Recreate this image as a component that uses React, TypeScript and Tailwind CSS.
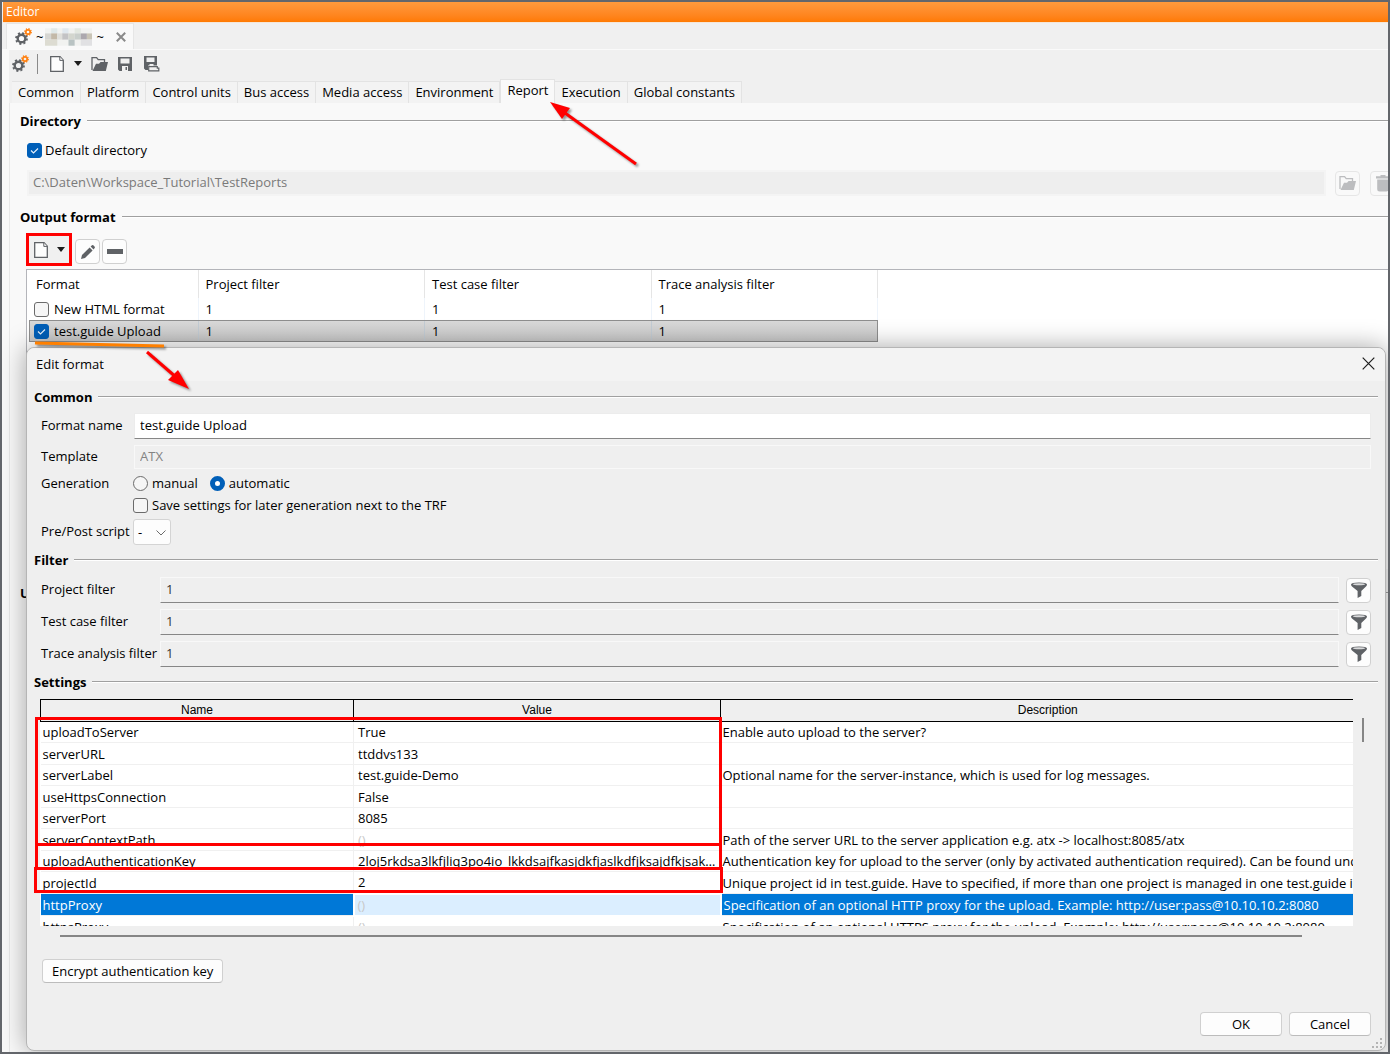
import React, { useState } from 'react';

interface FormatRow {
  name: string;
  enabled: boolean;
}

interface Setting {
  name: string;
  value: string;
  description: string;
}

const TABS = [
  'Common',
  'Platform',
  'Control units',
  'Bus access',
  'Media access',
  'Environment',
  'Report',
  'Execution',
  'Global constants',
];

const FORMATS: FormatRow[] = [
  { name: 'New HTML format', enabled: false },
  { name: 'test.guide Upload', enabled: true },
];

const FILTERS = ['Project filter', 'Test case filter', 'Trace analysis filter'];

const SETTINGS: Setting[] = [
  { name: 'uploadToServer', value: 'True', description: 'Enable auto upload to the server?' },
  { name: 'serverURL', value: 'ttddvs133', description: '' },
  { name: 'serverLabel', value: 'test.guide-Demo', description: 'Optional name for the server-instance, which is used for log messages.' },
  { name: 'useHttpsConnection', value: 'False', description: '' },
  { name: 'serverPort', value: '8085', description: '' },
  { name: 'serverContextPath', value: '', description: 'Path of the server URL to the server application e.g. atx -> localhost:8085/atx' },
  {
    name: 'uploadAuthenticationKey',
    value: '2loj5rkdsa3lkfjliq3po4io_lkkdsajfkasjdkfjaslkdfjksajdfkjsakdfjlk',
    description: 'Authentication key for upload to the server (only by activated authentication required). Can be found und',
  },
  {
    name: 'projectId',
    value: '2',
    description: 'Unique project id in test.guide. Have to specified, if more than one project is managed in one test.guide in',
  },
  { name: 'httpProxy', value: '', description: 'Specification of an optional HTTP proxy for the upload. Example: http://user:pass@10.10.10.2:8080' },
  { name: 'httpsProxy', value: '', description: 'Specification of an optional HTTPS proxy for the upload. Example: http://user:pass@10.10.10.2:8080' },
];

const GearsIcon = () => (
  <svg width="17" height="17" viewBox="0 0 17 17" fill="none" className="shrink-0">
    <circle cx="6.5" cy="10.5" r="3.8" stroke="#5f6266" strokeWidth="2.4" />
    <circle cx="6.5" cy="10.5" r="5.5" stroke="#5f6266" strokeWidth="1.8" strokeDasharray="2.1 2.22" />
    <circle cx="13" cy="4" r="2.2" stroke="#ff7f0e" strokeWidth="1.7" />
    <circle cx="13" cy="4" r="3.3" stroke="#ff7f0e" strokeWidth="1.2" strokeDasharray="1.3 1.29" />
  </svg>
);

const FileIcon = () => (
  <svg width="14" height="16" viewBox="0 0 14 16" fill="#fdfdfd" stroke="#5f6266" className="shrink-0">
    <path d="M.7.7h9.3l3.3 3.6v11H.7z" strokeWidth="1.3" />
    <path d="M9.8.8v3.6h3.5" strokeWidth="1" />
  </svg>
);

const CaretIcon = () => (
  <svg width="8" height="5" viewBox="0 0 8 5" className="shrink-0">
    <path d="M0 0h8L4 5z" fill="#1c1c1c" />
  </svg>
);

const FolderIcon = ({ className }: { className: string }) => (
  <svg width="17" height="14" viewBox="0 0 17 14" className={className}>
    <path d="M1 13V.7h4.600l1.600 2h6.300v2.300" fill="none" stroke="currentColor" strokeWidth="1.300" />
    <path d="M1.500 14 5 6.800h3L9.600 5H17l-2.200 9z" fill="currentColor" />
  </svg>
);

const SaveIcon = () => (
  <svg width="14" height="14" viewBox="0 0 14 14">
    <path fillRule="evenodd" d="M0 0h14v14H1.5L0 12.500zM2.500 1.500v5h9v-5zM4 9v5h6V9z" fill="#5f6266" />
    <path d="M7.500 10h1.500v3H7.500z" fill="#5f6266" />
  </svg>
);

const SaveAsIcon = () => (
  <svg width="16" height="16" viewBox="0 0 16 16">
    <path fillRule="evenodd" d="M0 0h13v9.500H4V14H1.500L0 12.500zM2.500 1.500v4.500h8V1.500z" fill="#5f6266" />
    <path d="M5.500 8h4v2h-4z" fill="#efefef" />
    <path d="M4.700 10.700h8.600v1.500h1.500v2.600H4.700z" fill="#efefef" stroke="#5f6266" strokeWidth="1.200" />
  </svg>
);

const TrashIcon = () => (
  <svg width="14" height="17" viewBox="0 0 14 17" fill="#bcbdbf" className="shrink-0">
    <path d="M4.500 0h5v1.300H14V3.600H0V1.300h4.500zM1.200 4.600h11.600V14q0 2.500-2.500 2.500H3.700Q1.200 16.500 1.200 14z" />
  </svg>
);

const PencilIcon = () => (
  <svg width="14" height="14" viewBox="0 0 14 14" fill="#5f6266">
    <path d="M0 14l1-4 7.600-7.600 3 3L4 13zM9.600 1.500 11 .3q.8-.6 1.600.2l.9.900q.8.800.2 1.600l-1.200 1.400z" />
  </svg>
);

const FunnelIcon = () => (
  <svg width="16" height="16" viewBox="0 0 16 16">
    <path d="M0 2.500Q0 .4 8 .4t8 2.100q0 1-1 1.900L10.300 9v5L6.600 16V9L1 4.400Q0 3.500 0 2.500z" fill="#5f6266" />
    <ellipse cx="8" cy="2.300" rx="6" ry="1" fill="#d9dadb" />
  </svg>
);

const GripIcon = () => (
  <svg width="10" height="10" viewBox="0 0 10 10" fill="#b4b4b4" className="absolute right-[3px] bottom-[2px]">
    <path d="M8 0h2v2H8zM8 4h2v2H8zM4 4h2v2H4zM8 8h2v2H8zM4 8h2v2H4zM0 8h2v2H0z" />
  </svg>
);

const SectionTitle = ({ children }: { children: React.ReactNode }) => (
  <div className="flex h-5 items-center gap-[6px]">
    <h2 className="font-bold">{children}</h2>
    <span className="h-[2px] grow border-t border-[#a0a0a0] bg-white" />
  </div>
);

const Checkbox = ({ id, defaultChecked }: { id: string; defaultChecked?: boolean }) => (
  <span className="inline-grid h-[15px] w-[15px] shrink-0">
    <input
      id={id}
      type="checkbox"
      defaultChecked={defaultChecked}
      className="peer col-start-1 row-start-1 h-[15px] w-[15px] appearance-none rounded-[3px] border border-[#6b6b6b] bg-[#f6f6f6] checked:border-[#005fb8] checked:bg-[#005fb8]"
    />
    <svg viewBox="0 0 15 15" className="pointer-events-none invisible col-start-1 row-start-1 peer-checked:visible">
      <path d="M4 7.500l2.500 2.500L11 5.500" fill="none" stroke="#e8f1fa" strokeWidth="1.100" />
    </svg>
  </span>
);

const Radio = ({ id, defaultChecked }: { id: string; defaultChecked?: boolean }) => (
  <input
    id={id}
    type="radio"
    name="generation"
    defaultChecked={defaultChecked}
    className="h-[15px] w-[15px] shrink-0 appearance-none rounded-full border border-[#6b6b6b] bg-[#f6f6f6] checked:border-[5px] checked:border-[#005fb8] checked:bg-white"
  />
);

const iconButton = 'flex h-[25px] w-[25px] shrink-0 items-center justify-center rounded-[4px] border border-[#d0d0d0] bg-[#fdfdfd]';
const textButton = 'h-6 rounded-[4px] border border-[#d0d0d0] border-b-[#bcbcbc] bg-[#fdfdfd]';
const fieldLabel = 'shrink-0 whitespace-nowrap pb-[2px]';

const EditFormatDialog = () => (
  <section
    role="dialog"
    aria-label="Edit format"
    className="absolute top-[345px] right-[2px] left-6 rounded-[8px] border border-[#b5b5b5] bg-[#efefef] pb-[14px] shadow-[0_0_26px_rgba(0,0,0,0.35)]"
  >
    <header className="flex h-[33px] items-center justify-between rounded-t-[8px] bg-[#f3f3f3] pr-[10px] pb-[2px] pl-[9px]">
      <h1>Edit format</h1>
      <button aria-label="Close">
        <svg width="13" height="13" viewBox="0 0 13 13" stroke="#1c1c1c" strokeWidth="1.200">
          <path d="M.7.7l11.600 11.600M12.300.7.7 12.300" />
        </svg>
      </button>
    </header>

    <div className="mt-[6px] px-[7px]">
      <SectionTitle>Common</SectionTitle>
      <div className="px-[7px]">
        <div className="mt-[6px] flex h-[26px] items-center">
          <label htmlFor="format-name" className={`${fieldLabel} w-[93px]`}>Format name</label>
          <input id="format-name" defaultValue="test.guide Upload" className="h-full min-w-0 grow border border-[#ececec] border-b-[#868686] bg-white px-[5px] pb-[2px]" />
        </div>
        <div className="mt-[6px] flex h-6 items-center">
          <label htmlFor="template" className={`${fieldLabel} w-[93px]`}>Template</label>
          <input id="template" disabled defaultValue="ATX" className="h-full min-w-0 grow border border-[#f8f8f8] px-[5px] pb-[2px] text-[#838383]" />
        </div>
        <div className="mt-1 flex h-5 items-center">
          <span className="w-[92px] shrink-0">Generation</span>
          <Radio id="gen-manual" />
          <label htmlFor="gen-manual" className="mr-[12px] ml-1">manual</label>
          <Radio id="gen-auto" defaultChecked />
          <label htmlFor="gen-auto" className="ml-1">automatic</label>
        </div>
        <div className="mt-[2px] flex h-5 items-center pl-[92px]">
          <Checkbox id="save-settings" />
          <label htmlFor="save-settings" className="ml-1">Save settings for later generation next to the TRF</label>
        </div>
        <div className="mt-1 flex h-[26px] items-center">
          <label htmlFor="script" className={`${fieldLabel} w-[92px]`}>Pre/Post script</label>
          <span className="relative h-full w-[38px]">
            <select id="script" className="h-full w-full appearance-none rounded-[3px] border border-[#d4d4d4] bg-[#fdfdfd] pl-1">
              <option>-</option>
            </select>
            <svg width="10" height="6" viewBox="0 0 10 6" fill="none" stroke="#6b6b6b" className="pointer-events-none absolute top-[11px] right-[5px]">
              <path d="M.5.5 5 5 9.500.5" />
            </svg>
          </span>
        </div>
      </div>

      <div className="mt-[5px]">
        <SectionTitle>Filter</SectionTitle>
      </div>
      <div className="mt-[7px] flex flex-col gap-[6px] px-[7px]">
        {FILTERS.map(filter => (
          <div key={filter} className="flex h-[26px] items-center">
            <label htmlFor={filter} className={`${fieldLabel} w-[119px]`}>{filter}</label>
            <input id={filter} readOnly defaultValue="1" className="mr-[7px] h-full min-w-0 grow border border-[#f8f8f8] border-b-[#868686] px-[5px] pb-[2px] text-[#333]" />
            <button aria-label={`Edit ${filter}`} className={iconButton}><FunnelIcon /></button>
          </div>
        ))}
      </div>

      <div className="mt-[5px]">
        <SectionTitle>Settings</SectionTitle>
      </div>
      <div className="relative mt-[7px] mr-[25px] ml-[6px]">
        <div className="h-[227px] overflow-hidden bg-white">
          <table className="w-[1334px] table-fixed border-collapse">
            <thead>
              <tr className="h-[22px] border-y border-black bg-[#efefef] font-['Liberation_Sans',sans-serif] text-[12px] leading-4">
                <th className="w-[313px] border-x border-black p-0 pb-[2px] font-normal">Name</th>
                <th className="w-[367px] border-x border-black p-0 pb-[2px] font-normal">Value</th>
                <th className="w-[654px] p-0 pb-[2px] font-normal">Description</th>
              </tr>
            </thead>
            <tbody>
              {SETTINGS.map(s => {
                const selected = s.name === 'httpProxy';
                return (
                  <tr key={s.name} className="h-[21px] border-b border-[#f0f0f0] even:h-[22px]">
                    <td className={selected ? 'bg-[#0078d7] p-0 pl-[2px] text-white' : 'p-0 pl-[2px]'}>{s.name}</td>
                    <td className={selected ? 'border-2 border-white bg-[#dbeeff] p-0 pl-[3px]' : 'truncate border-l border-[#f0f0f0] p-0 pl-1'}>
                      {s.value || <span className="text-[#c8c8c8]">()</span>}
                    </td>
                    <td className={selected ? 'overflow-hidden bg-[#0078d7] p-0 pl-[2px] whitespace-nowrap text-white' : 'overflow-hidden p-0 pl-[2px] whitespace-nowrap'}>
                      {s.description}
                    </td>
                  </tr>
                );
              })}
            </tbody>
          </table>
        </div>
        <span className="absolute top-[19px] right-[-11px] h-6 w-[2px] bg-[#868686]" />
        {/* markers around the upload settings */}
        <span className="absolute top-[18px] left-[-5px] h-[129px] w-[687px] border-[3px] border-[#f00]" />
        <span className="absolute top-[144px] left-[-5px] h-[27px] w-[687px] border-[3px] border-[#f00]" />
        <span className="absolute top-[168px] left-[-6px] h-[26px] w-[689px] border-[3px] border-[#f00]" />
      </div>
      <div className="mt-[9px] mr-[76px] ml-[26px] h-[2px] bg-[#868686]" />

      <button className={`${textButton} mt-[22px] ml-2 px-[9px]`}>Encrypt authentication key</button>
      <div className="mt-[29px] flex justify-end gap-[7px] pr-[7px]">
        <button className={`${textButton} w-[82px]`}>OK</button>
        <button className={`${textButton} w-[82px]`}>Cancel</button>
      </div>
    </div>
    <GripIcon />

    {/* underline and arrow leading from the selected format into the dialog */}
    <svg width="170" height="54" viewBox="0 0 170 54" className="pointer-events-none absolute top-[-8px] left-[5px] drop-shadow-[2px_2px_1px_rgba(0,0,0,0.4)]">
      <path d="M3 3 132 6" stroke="#ff8000" strokeWidth="3" />
      <path d="M115 12 145 38" stroke="#f00" strokeWidth="3" />
      <path d="M157 49 136 40 146 30z" fill="#f00" />
    </svg>
  </section>
);

const App: React.FC = () => {
  const [activeTab, setActiveTab] = useState('Report');

  return (
    <div className="relative flex min-h-screen flex-col overflow-hidden border-2 border-[#63666b] bg-[#f0f0f0] font-['Open_Sans','Noto_Sans',sans-serif] text-[13px] leading-5 text-black">
      <div className="ml-px flex h-[21px] items-center border-b border-[#f5e6d8] bg-linear-to-b from-[#ff9a3c] to-[#ff7a00] pl-[3px] text-[12px] text-white">
        Editor
      </div>

      <div className="flex h-[27px] items-end border-b border-[#fafafa] pl-1">
        <div className="flex h-[26px] items-center border border-b-0 border-[#e6e6e6] bg-[#f9f9f9] pr-[7px] pl-2">
          <GearsIcon />
          <span className="ml-1">~</span>
          <svg width="47" height="18" viewBox="0 0 46 17" className="mx-[2px]">
            <rect width="46" height="17" fill="#f1f2f0" />
            <rect x="6" width="6" height="5" fill="#dfe8e8" />
            <rect x="17" width="6" height="5" fill="#e0e8ee" />
            <rect x="29" width="6" height="5" fill="#e3e8e0" />
            <rect y="5" width="6" height="6" fill="#d6d6d2" />
            <rect x="6" y="5" width="6" height="6" fill="#c3b9a8" />
            <rect x="12" y="5" width="6" height="6" fill="#dfdfdb" />
            <rect x="17" y="5" width="6" height="6" fill="#c3c3c5" />
            <rect x="23" y="5" width="6" height="6" fill="#d3d6ce" />
            <rect x="29" y="5" width="6" height="6" fill="#c9cfcb" />
            <rect x="35" y="5" width="6" height="6" fill="#aca8ae" />
            <rect x="41" y="5" width="5" height="6" fill="#c9c4b6" />
            <rect x="23" y="11" width="6" height="6" fill="#b9c3c3" />
            <rect y="11" width="12" height="6" fill="#dddcd2" />
            <rect x="35" y="11" width="11" height="6" fill="#e1e1e3" />
          </svg>
          <span className="ml-[2px]">~</span>
          <button aria-label="Close tab" className="ml-[12px]">
            <svg width="10" height="10" viewBox="0 0 10 10" stroke="#8a8a8a" strokeWidth="2">
              <path d="M.8.8l8.400 8.400M9.200.8.8 9.200" />
            </svg>
          </button>
        </div>
      </div>

      <div className="flex grow flex-col border-l-[7px] border-[#f9f9f9]">
        <div className="flex h-[29px] items-center pb-[2px] pl-[3px] text-[#5f6266]">
          <button aria-label="Configuration"><GearsIcon /></button>
          <span className="mr-[12px] ml-2 h-5 w-px bg-[#8a8a8a]" />
          <button aria-label="New" className="flex items-center gap-[10px]"><FileIcon /><CaretIcon /></button>
          <button aria-label="Open" className="ml-[9px]"><FolderIcon className="text-[#5f6266]" /></button>
          <button aria-label="Save" className="ml-[10px]"><SaveIcon /></button>
          <button aria-label="Save as" className="ml-[12px]"><SaveAsIcon /></button>
        </div>

        <div role="tablist" className="flex h-6 items-end pl-[3px]">
          {TABS.map(tab =>
            tab === activeTab ? (
              <div key={tab} className="relative h-6">
                <button role="tab" aria-selected="true" className="h-6 border border-b-0 border-[#e3e3e3] bg-[#f9f9f9] px-[6px] pb-[3px]">
                  {tab}
                </button>
                <svg width="94" height="70" viewBox="0 0 94 70" className="pointer-events-none absolute top-[22px] left-[50px] z-10 drop-shadow-[2px_2px_1px_rgba(0,0,0,0.4)]">
                  <path d="M15 12 86 63" stroke="#f00" strokeWidth="3" />
                  <path d="M0 1 20 7 12 18z" fill="#f00" />
                </svg>
              </div>
            ) : (
              <button
                key={tab}
                role="tab"
                aria-selected="false"
                onClick={() => setActiveTab(tab)}
                className="h-[22px] border-t border-r border-[#e3e3e3] bg-[#f3f3f3] px-[6px] pb-[2px] whitespace-nowrap"
              >
                {tab}
              </button>
            )
          )}
        </div>

        <main className="grow border-l border-[#e8e8e8] bg-[#f9f9f9] pt-2 pl-[10px]">
          <SectionTitle>Directory</SectionTitle>
          <div className="mt-[9px] flex h-5 items-center gap-[3px] pl-[7px]">
            <Checkbox id="default-directory" defaultChecked />
            <label htmlFor="default-directory">Default directory</label>
          </div>
          <div className="mt-[10px] mr-[-7px] flex h-[26px] items-center pl-[7px]">
            <input
              aria-label="Report directory"
              disabled
              defaultValue="C:\Daten\Workspace_Tutorial\TestReports"
              className="h-full min-w-0 grow border-2 border-[#f4f4f4] bg-[#eee] px-1 pb-[2px] text-[#7a7a7a]"
            />
            <button aria-label="Browse" className="ml-[9px] flex h-[25px] w-[25px] shrink-0 items-center justify-center rounded-[4px] border border-[#e6e6e6]">
              <FolderIcon className="text-[#bcbdbf]" />
            </button>
            <button aria-label="Reset directory" className="ml-[10px] flex h-[25px] w-[25px] shrink-0 items-center justify-center rounded-[4px] border border-[#e6e6e6]">
              <TrashIcon />
            </button>
          </div>

          <div className="mt-[11px]">
            <SectionTitle>Output format</SectionTitle>
          </div>
          <div className="mt-[6px] flex h-[33px] items-end pl-[6px]">
            <div className="h-full w-[46px] border-[3px] border-[#f00]">
              <button aria-label="New format" className="flex h-full w-full items-center justify-center gap-[9px] bg-[#f0f0f0]">
                <FileIcon /><CaretIcon />
              </button>
            </div>
            <div className="ml-[3px] flex gap-[2px] pb-[2px]">
              <button aria-label="Edit format" className={iconButton}><PencilIcon /></button>
              <button aria-label="Remove format" className={iconButton}>
                <span className="h-[5px] w-4 bg-[#5f6266]" />
              </button>
            </div>
          </div>

          <div className="mt-[3px] ml-[6px] h-[300px] border-t border-l border-[#b4b5ba] bg-white pl-[2px]">
            <table className="w-[849px] table-fixed border-collapse">
              <thead>
                <tr className="h-[28px] text-left">
                  <th className="w-[169px] border-r border-[#e5e5e5] p-0 pl-[7px] font-normal">Format</th>
                  {FILTERS.map(f => (
                    <th key={f} className="border-r border-[#e5e5e5] p-0 pl-[7px] font-normal">{f}</th>
                  ))}
                </tr>
              </thead>
              <tbody>
                {FORMATS.map(f => (
                  <tr key={f.name} className={f.enabled ? 'h-[22px] bg-linear-to-b from-[#dadada] to-[#c8c8c8] outline outline-offset-[-1px] outline-[#8e8e8e]' : 'h-[22px]'}>
                    <td className={f.enabled ? 'border-r border-[#c3ccd4] p-0 pl-[5px]' : 'border-r border-[#eef4fb] p-0 pl-[5px]'}>
                      <span className="flex items-center gap-[5px]">
                        <Checkbox id={f.name} defaultChecked={f.enabled} />
                        <label htmlFor={f.name}>{f.name}</label>
                      </span>
                    </td>
                    {FILTERS.map(filter => (
                      <td key={filter} className={f.enabled ? 'border-r border-[#c3ccd4] p-0 pl-[7px]' : 'border-r border-[#eef4fb] p-0 pl-[7px]'}>1</td>
                    ))}
                  </tr>
                ))}
              </tbody>
            </table>
          </div>
          <div className="mt-[14px]">
            <SectionTitle>U</SectionTitle>
          </div>
        </main>
      </div>

      <EditFormatDialog />
    </div>
  );
};

export default App;
